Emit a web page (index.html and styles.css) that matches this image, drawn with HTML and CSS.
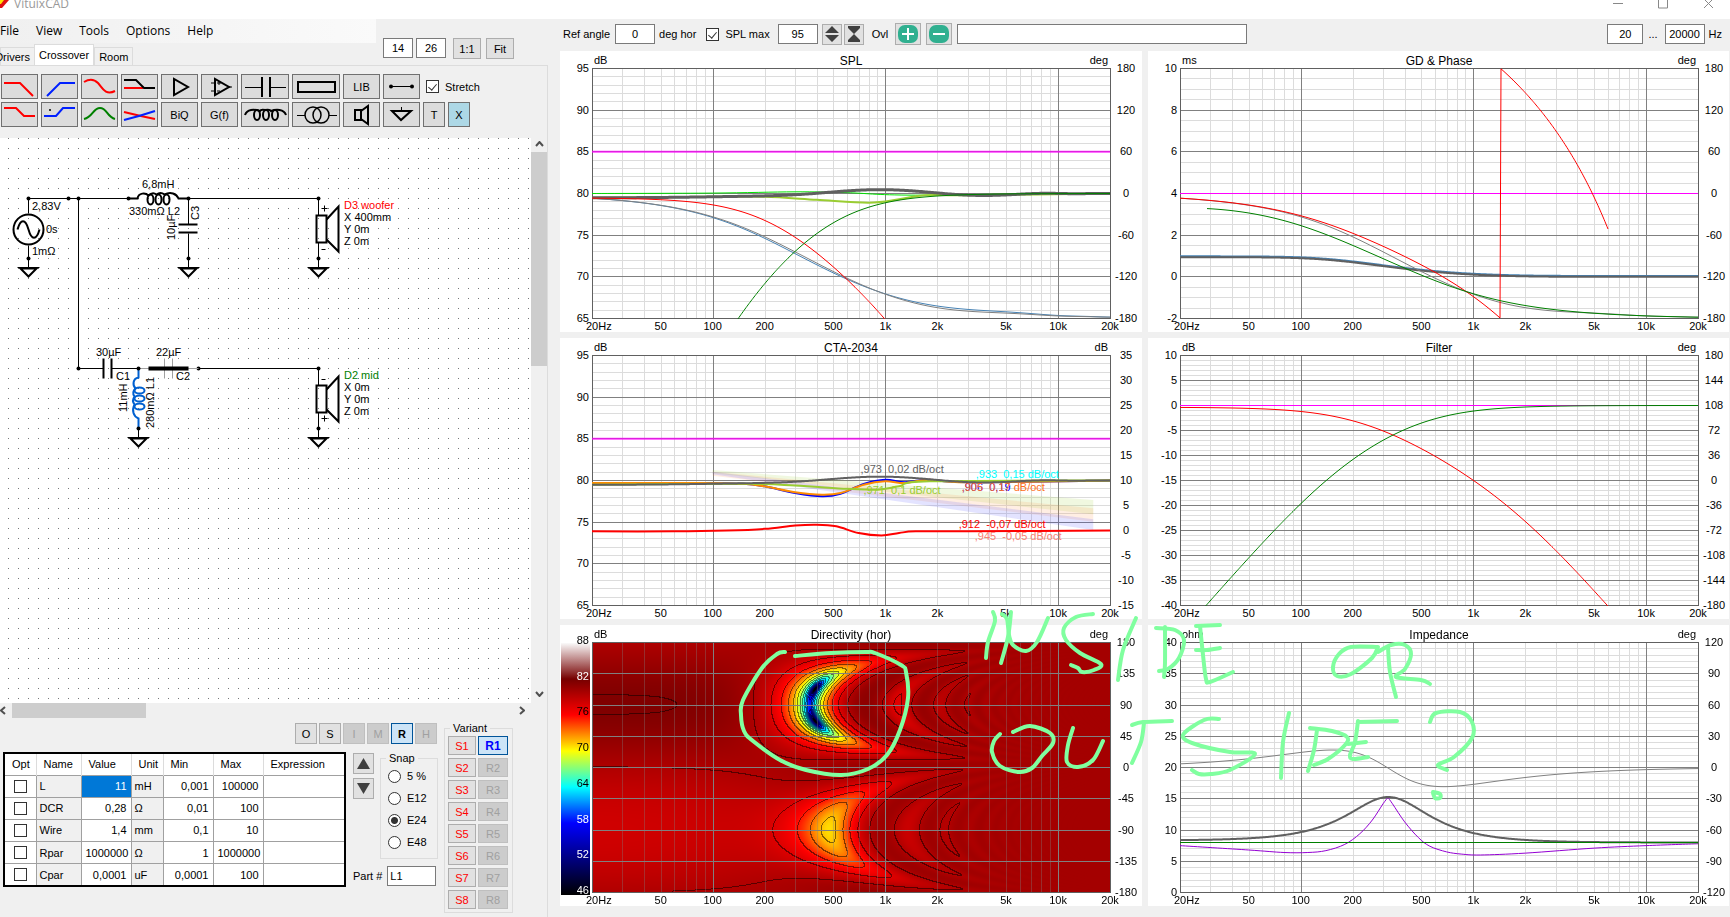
FILE: index.html
```html
<!DOCTYPE html>
<html lang="en">
<head>
    <meta charset="UTF-8">
    <meta name="viewport" content="width=device-width, initial-scale=1.0">
    <title>VituixCAD</title>
    <link rel="stylesheet" href="styles.css">
</head>
<body>
    <header class="titlebar">
        <svg class="logo" width="10" height="9" viewBox="0 0 10 9"><path d="M0 0h9L2 8H0z" fill="#e01010"/><path d="M0 0h4L1 4H0z" fill="#ffe000"/></svg>
        <span class="title">VituixCAD</span>
        <svg class="winbuttons" width="110" height="9" viewBox="0 0 110 9" fill="none" stroke="#888"><path d="M4 3.500h10M49.500 -2v10h9v-10M95 8l9-9M104 8l-9-9"/></svg>
    </header>

    <div class="main">
        <section class="left">
            <div class="head">
                <div class="nav">
                    <nav class="menu">
                        <a href="#">File</a><a href="#">View</a><a href="#">Tools</a><a href="#">Options</a><a href="#">Help</a>
                    </nav>
                    <div class="tabs">
                        <button class="tab first">Drivers</button>
                        <button class="tab active">Crossover</button>
                        <button class="tab">Room</button>
                    </div>
                </div>
                <div class="zoom">
                    <input type="text" value="14" aria-label="Columns">
                    <input type="text" value="26" aria-label="Rows">
                    <button class="btn one">1:1</button>
                    <button class="btn">Fit</button>
                </div>
            </div>

            <div class="page">
                <div class="parts">
                    <div class="row">
                        <button class="part" aria-label="Low pass"><svg viewBox="0 0 35 23"><path d="M2 8H18L31 21" stroke="red"/></svg></button>
                        <button class="part" aria-label="High pass"><svg viewBox="0 0 35 23"><path d="M5 21L18 8H33" stroke="#0020ff"/></svg></button>
                        <button class="part" aria-label="Shelf"><svg viewBox="0 0 35 23"><path d="M2 7C7 4 12 4 16 8S23 21 33 16" stroke="red"/></svg></button>
                        <button class="part" aria-label="Shelving"><svg viewBox="0 0 35 23"><path d="M2 13H21" stroke="red"/><path d="M2 5H14L22 13H33" stroke="#000"/></svg></button>
                        <button class="part" aria-label="Buffer"><svg viewBox="0 0 35 23"><path d="M12 4V20L26 12Z" stroke="#000"/></svg></button>
                        <button class="part" aria-label="Op amp"><svg viewBox="0 0 35 23"><path d="M13 4V20L27 12Z" stroke="#000"/><path d="M9 8H13M9 16H13M27 12H30M15 8H19M17 6V10M15 16H18" stroke="#000" stroke-width="1"/></svg></button>
                        <button class="part wide" aria-label="Capacitor"><svg viewBox="0 0 46 23"><path d="M3 12.500H20M28 12.500H44" stroke="#000" stroke-width="1"/><path d="M20 2V22M28 2V22" stroke="#000"/></svg></button>
                        <button class="part wide" aria-label="Resistor"><svg viewBox="0 0 46 23"><path d="M5 7H42V17H5Z" stroke="#000"/></svg></button>
                        <button class="part">LIB</button>
                        <button class="part" aria-label="Wire"><svg viewBox="0 0 35 23"><path d="M7 11.500H28" stroke="#000" stroke-width="1"/><circle cx="7" cy="11.500" r="2"/><circle cx="28" cy="11.500" r="2"/></svg></button>
                        <label class="stretch"><input type="checkbox" checked> Stretch</label>
                    </div>
                    <div class="row">
                        <button class="part" aria-label="Low shelf"><svg viewBox="0 0 35 23"><path d="M2 5H14L22 13H33" stroke="red"/></svg></button>
                        <button class="part" aria-label="High shelf"><svg viewBox="0 0 35 23"><path d="M2 13H14L21 5H33" stroke="#0020ff"/><circle cx="8" cy="7" r="1"/></svg></button>
                        <button class="part" aria-label="Peak"><svg viewBox="0 0 35 23"><path d="M2 16C11 14 11 5 18 5S25 14 33 16" stroke="#008000"/></svg></button>
                        <button class="part" aria-label="All pass"><svg viewBox="0 0 35 23"><path d="M2 9Q18 13 33 16" stroke="red"/><path d="M2 17Q18 13 33 8" stroke="#0020ff"/></svg></button>
                        <button class="part">BiQ</button>
                        <button class="part">G(f)</button>
                        <button class="part wide" aria-label="Inductor"><svg viewBox="0 0 46 23"><g stroke="#000"><path d="M3 12C5 6 12 6 18 8Q19 6 23 7Q28 6 29 8C34 6 42 6 44 12"/><ellipse cx="15" cy="12" rx="3" ry="5"/><ellipse cx="24" cy="12" rx="3" ry="5"/><ellipse cx="33" cy="12" rx="3" ry="5"/></g></svg></button>
                        <button class="part wide" aria-label="Transformer"><svg viewBox="0 0 46 23"><path d="M4 12.500H12M36 12.500H44" stroke="#000" stroke-width="1"/><g stroke="#000" stroke-width="1.500"><circle class="open" cx="20" cy="12" r="8"/><circle class="open" cx="28" cy="12" r="8"/></g></svg></button>
                        <button class="part" aria-label="Driver"><svg viewBox="0 0 35 23"><path d="M11 7H17V17H11ZM17 8L24 3V21L17 16" stroke="#000"/></svg></button>
                        <button class="part" aria-label="Ground"><svg viewBox="0 0 35 23"><path d="M17.500 4V8" stroke="#000" stroke-width="1"/><path d="M8 8H27L17 17Z" stroke="#000"/></svg></button>
                        <button class="part small">T</button>
                        <button class="part small blue">X</button>
                    </div>
                </div>

                <div class="sheet">
                    <div class="canvas">
                        <svg width="531" height="565" class="schematic">
                            <defs>
                                <g id="gnd"><path d="M0 0V9"/><path class="thick" d="M-8 10H8L0 18Z"/><path d="M-11 9H11"/><circle r="2" class="dot"/></g>
                                <g id="speaker">
                                    <path d="M0 0V17M0 44V60"/>
                                    <path class="thick" d="M-2 17H8V44H-2Z"/>
                                    <path class="thick" d="M8 21L20 8V53L8 41"/>
                                    <circle r="2" class="dot"/>
                                </g>
                                <g id="coil" class="thick">
                                    <path d="M0 0H9C10 -6 17 -6 20 -3Q24 -7 28 -4Q32 -7 36 -4C42 -7 48 -5 50 0H60"/>
                                    <ellipse cx="22" cy="1" rx="3" ry="5"/><ellipse cx="30" cy="1" rx="3" ry="5"/><ellipse cx="38" cy="1" rx="3" ry="5"/>
                                </g>
                            </defs>
                            <g transform="translate(.5 .5)">
                                <path d="M28 60H137M179 60H318M78 60V230H103M111 230H138M198 230H318M188 60V86M188 95V120M28 60V75M28 107V120"/>
                                <use href="#coil" x="128" y="60"/>
                                <g class="dot">
                                    <circle cx="28" cy="60" r="2"/><circle cx="68" cy="60" r="2"/><circle cx="78" cy="60" r="2"/><circle cx="128" cy="60" r="2"/><circle cx="188" cy="60" r="2"/>
                                    <circle cx="78" cy="230" r="2"/><circle cx="198" cy="230" r="2"/>
                                </g>
                                <g class="thick">
                                    <circle cx="28" cy="91" r="15"/>
                                    <path d="M17 91C20 80 25 80 28 91S36 102 39 91"/>
                                    <path d="M178 86H197M178 94H197M103 220V240M111 220V240"/>
                                </g>
                                <path class="ghost" d="M138 230H198M164 220V240M172 220V240"/>
                                <path class="short" d="M148 230H188"/>
                                <g class="selected" transform="translate(138 230) rotate(90) scale(1 -1)"><use href="#coil"/></g>
                                <circle class="dot" cx="138" cy="230" r="2"/>
                                <use href="#gnd" x="28" y="120"/><use href="#gnd" x="188" y="120"/><use href="#gnd" x="318" y="120"/>
                                <use href="#gnd" x="138" y="290"/><use href="#gnd" x="318" y="290"/>
                                <use href="#speaker" x="318" y="60"/><use href="#speaker" x="318" y="230"/>
                                <path d="M321 70H327M324 67V73M321 111H325M321 241H325M321 280H327M324 277V283"/>
                            </g>
                            <g class="names">
                                <text x="142" y="50">6,8mH</text><text x="129" y="77">330mΩ L2</text>
                                <text x="32" y="72">2,83V</text><text x="46" y="95">0s</text><text x="32" y="117">1mΩ</text>
                                <text transform="translate(199 82) rotate(-90)">C3</text><text transform="translate(175 102) rotate(-90)">10µF</text>
                                <text x="96" y="218">30µF</text><text x="156" y="218">22µF</text><text x="116" y="242">C1</text><text x="176" y="242">C2</text>
                                <text transform="translate(127 274) rotate(-90)">11mH</text><text transform="translate(154 290) rotate(-90)">280mΩ L1</text>
                                <text x="344" y="71" fill="red">D3 woofer</text><text x="344" y="83">X 400mm</text><text x="344" y="95">Y 0m</text><text x="344" y="107">Z 0m</text>
                                <text x="344" y="241" fill="green">D2 mid</text><text x="344" y="253">X 0m</text><text x="344" y="265">Y 0m</text><text x="344" y="277">Z 0m</text>
                            </g>
                        </svg>
                    </div>
                    <div class="vscroll">
                        <svg width="9" height="6" viewBox="0 0 9 6"><path d="M1 5L4.500 1L8 5"/></svg>
                        <div class="vthumb"></div>
                        <svg width="9" height="6" viewBox="0 0 9 6"><path d="M1 1L4.500 5L8 1"/></svg>
                    </div>
                </div>
                <div class="hscroll">
                    <svg width="6" height="9" viewBox="0 0 6 9"><path d="M5 1L1 4.500L5 8"/></svg>
                    <div class="hthumb"></div>
                    <svg width="6" height="9" viewBox="0 0 6 9"><path d="M1 1L5 4.500L1 8"/></svg>
                </div>

                <div class="props">
                    <div class="editor">
                        <div class="modes">
                            <button class="btn">O</button><button class="btn">S</button><button class="btn" disabled>I</button><button class="btn" disabled>M</button><button class="btn on">R</button><button class="btn" disabled>H</button>
                        </div>
                        <div class="editrow">
                            <table>
                                <thead>
                                    <tr><th class="c-opt">Opt</th><th class="c-name">Name</th><th class="c-value">Value</th><th class="c-unit">Unit</th><th class="c-min">Min</th><th class="c-max">Max</th><th>Expression</th></tr>
                                </thead>
                                <tbody>
                                    <tr><td><input type="checkbox" aria-label="Optimize L"></td><td>L</td><td class="sel">11</td><td>mH</td><td>0,001</td><td>100000</td><td></td></tr>
                                    <tr><td><input type="checkbox" aria-label="Optimize DCR"></td><td>DCR</td><td>0,28</td><td>Ω</td><td>0,01</td><td>100</td><td></td></tr>
                                    <tr><td><input type="checkbox" aria-label="Optimize Wire"></td><td>Wire</td><td>1,4</td><td>mm</td><td>0,1</td><td>10</td><td></td></tr>
                                    <tr><td><input type="checkbox" aria-label="Optimize Rpar"></td><td>Rpar</td><td>1000000</td><td>Ω</td><td>1</td><td>1000000</td><td></td></tr>
                                    <tr><td><input type="checkbox" aria-label="Optimize Cpar"></td><td>Cpar</td><td>0,0001</td><td>uF</td><td>0,0001</td><td>100</td><td></td></tr>
                                </tbody>
                            </table>
                            <div class="side">
                                <div class="siderow">
                                    <div class="arrows">
                                        <button class="btn" aria-label="Up"><svg width="13" height="11" viewBox="0 0 13 11"><path d="M6.500 0L13 11H0z"/></svg></button>
                                        <button class="btn" aria-label="Down"><svg width="13" height="11" viewBox="0 0 13 11"><path d="M6.500 11L13 0H0z"/></svg></button>
                                    </div>
                                    <fieldset class="snap">
                                        <legend>Snap</legend>
                                        <label><input type="radio" name="snap">5 %</label>
                                        <label><input type="radio" name="snap">E12</label>
                                        <label><input type="radio" name="snap" checked>E24</label>
                                        <label><input type="radio" name="snap">E48</label>
                                    </fieldset>
                                </div>
                                <div class="partno"><label for="partno">Part #</label><input type="text" id="partno" value="L1"></div>
                            </div>
                        </div>
                    </div>
                    <fieldset class="variant">
                        <legend>Variant</legend>
                        <button class="btn s">S1</button><button class="btn on">R1</button>
                        <button class="btn s">S2</button><button class="btn" disabled>R2</button>
                        <button class="btn s">S3</button><button class="btn" disabled>R3</button>
                        <button class="btn s">S4</button><button class="btn" disabled>R4</button>
                        <button class="btn s">S5</button><button class="btn" disabled>R5</button>
                        <button class="btn s">S6</button><button class="btn" disabled>R6</button>
                        <button class="btn s">S7</button><button class="btn" disabled>R7</button>
                        <button class="btn s">S8</button><button class="btn" disabled>R8</button>
                    </fieldset>
                </div>
            </div>
        </section>

        <section class="right">
            <div class="bar">
                <label for="refangle">Ref angle</label>
                <input type="text" id="refangle" value="0">
                <span>deg hor</span>
                <label class="splmax"><input type="checkbox" checked>SPL max</label>
                <input type="text" value="95" aria-label="SPL max value">
                <div class="pair">
                    <button class="btn" aria-label="Shift scale"><svg width="14" height="16" viewBox="0 0 14 16"><path d="M7 0L14 7H0zM7 16L14 9H0z"/></svg></button>
                    <button class="btn" aria-label="Fit scale"><svg width="14" height="16" viewBox="0 0 14 16"><path d="M7 8L13 2H1zM7 8L13 14H1zM1 0H13V2H1zM1 14H13V16H1z"/></svg></button>
                </div>
                <label for="ovl">Ovl</label>
                <div class="ovlbuttons">
                    <button class="btn" aria-label="Add overlay"><svg width="20" height="18" viewBox="0 0 20 18"><rect width="20" height="18" rx="7" fill="#30b090"/><path d="M4 9H16M10 3V15" stroke="#fff" stroke-width="2"/></svg></button>
                    <button class="btn" aria-label="Remove overlay"><svg width="20" height="18" viewBox="0 0 20 18"><rect width="20" height="18" rx="7" fill="#30b090"/><path d="M4 9H16" stroke="#fff" stroke-width="2"/></svg></button>
                </div>
                <input type="text" id="ovl" class="ovl">
                <input type="text" value="20" class="fmin" aria-label="Lowest frequency">
                <span class="dots">...</span>
                <input type="text" id="fmax" value="20000">
                <label for="fmax">Hz</label>
            </div>
            <div class="charts">
                <div class="chart" id="spl"></div>
                <div class="chart" id="gd"></div>
                <div class="chart" id="cta"></div>
                <div class="chart" id="filter"></div>
                <div class="chart" id="directivity"></div>
                <div class="chart" id="impedance"></div>
            </div>
        </section>
    </div>
    <svg class="ink" id="ink" viewBox="0 0 1730 917" preserveAspectRatio="none"></svg>
    <script src="charts.js"></script>
</body>
</html>
```
FILE: styles.css
```css
* {
    box-sizing: border-box;
}
body {
    margin: 0;
    height: 100vh;
    display: flex;
    flex-direction: column;
    overflow: hidden;
    background: #f0f0f0;
    font-family: "Liberation Sans", Arial, sans-serif;
    font-size: 11px;
    color: #000;
}
button, input {
    font: inherit;
    color: inherit;
    margin: 0;
}
input[type="text"] {
    height: 20px;
    border: 1px solid #7a7a7a;
    background: #fff;
    padding: 0;
    text-align: center;
}
.btn {
    display: flex;
    align-items: center;
    justify-content: center;
    padding: 0;
    border: 1px solid #adadad;
    background: #e1e1e1;
}
.btn:disabled {
    border-color: #bfbfbf;
    background: #ccc;
    color: #a0a0a0;
}
.btn.on {
    border-color: #005499;
    background: #cce4f7;
    font-weight: bold;
}
.btn svg {
    fill: #404040;
}
input[type="checkbox"], input[type="radio"] {
    appearance: none;
    flex: none;
    width: 13px;
    height: 13px;
    border: 1px solid #333;
    background: #fff;
}
input[type="radio"] {
    border-radius: 50%;
}
input[type="radio"]:checked {
    background: radial-gradient(circle, #333 3px, #fff 4px);
}
input[type="checkbox"]:checked::before {
    content: "";
    display: block;
    width: 4px;
    height: 7px;
    margin: 1px 0 0 3px;
    border: solid #333;
    border-width: 0 1px 1px 0;
    transform: rotate(40deg);
}

/* title bar */
.titlebar {
    flex: none;
    display: flex;
    align-items: flex-end;
    height: 19px;
    padding-bottom: 7px;
    background: #fff;
    overflow: hidden;
}
.title {
    margin-left: 4px;
    font: 12px/16px "Open Sans", sans-serif;
    color: #999;
}
.logo {
    align-self: flex-start;
}
.winbuttons {
    align-self: flex-start;
    margin-left: auto;
    margin-right: 11px;
}

.main {
    flex: 1;
    display: flex;
    min-height: 0;
}

/* left side */
.left {
    flex: none;
    width: 550px;
    display: flex;
    flex-direction: column;
}
.head {
    display: flex;
    height: 46px;
}
.nav {
    width: 376px;
}
.menu {
    display: flex;
    gap: 17px;
    height: 24px;
    background: linear-gradient(to right, #f0f0f0, #fafafa);
    font: 12px/24px "Open Sans", sans-serif;
}
.menu a {
    color: #000;
    text-decoration: none;
}
.tabs {
    display: flex;
    align-items: flex-end;
    height: 22px;
}
.tab {
    height: 18px;
    padding: 0 4px;
    border: 1px solid #dcdcdc;
    border-bottom: 0;
    background: #f0f0f0;
}
.tab.first {
    width: 34px;
    padding: 0 4px 0 0;
    direction: rtl;
    border-right: 0;
}
.tab.active {
    height: 21px;
    background: #fff;
}
.zoom {
    display: flex;
    align-items: flex-start;
    gap: 3px;
    padding: 19px 0 0 7px;
}
.zoom input {
    width: 30px;
}
.zoom .btn {
    width: 28px;
    height: 21px;
    margin-left: 2px;
}
.zoom .one {
    margin-left: 4px;
}
.page {
    flex: 1;
    display: flex;
    flex-direction: column;
    min-height: 0;
    margin-right: 2px;
    border-top: 1px solid #dcdcdc;
    border-right: 1px solid #dcdcdc;
}
.parts {
    padding: 8px 0 11px 1px;
}
.row {
    display: flex;
    gap: 3px;
    margin-bottom: 3px;
}
.row + .row {
    margin-bottom: 0;
}
.part {
    width: 37px;
    height: 25px;
    padding: 0;
    border: 1px solid #707070;
    background: #dcdcdc;
}
.part.wide {
    width: 48px;
}
.part.small {
    width: 22px;
}
.part.blue {
    background: #add8e6;
}
.part svg {
    display: block;
    width: 100%;
    height: 23px;
    stroke-width: 2;
}
.part path, .part ellipse, .part .open {
    fill: none;
}
.stretch {
    display: flex;
    align-items: center;
    gap: 6px;
    margin-left: 3px;
}

.sheet {
    flex: 1;
    display: flex;
    min-height: 0;
}
.canvas {
    flex: 1;
    overflow: hidden;
    background: radial-gradient(circle at 0 0, #777 1px, transparent 1px) 8px 10px / 10px 10px, #fff;
}
.schematic {
    display: block;
    fill: none;
    stroke: #000;
}
.schematic .thick {
    stroke-width: 2;
}
.schematic .dot {
    fill: #000;
    stroke: none;
}
.schematic .ghost {
    stroke: #a0a0a0;
}
.schematic .short {
    stroke-width: 4;
}
.schematic .selected {
    stroke: #0060d0;
}
.names text {
    stroke: none;
    font-size: 11px;
}
.names text:not([fill]) {
    fill: #000;
}
.vscroll {
    display: flex;
    flex-direction: column;
    align-items: center;
    justify-content: space-between;
    width: 16px;
    padding: 3px 0 6px;
}
.vthumb {
    width: 16px;
    height: 214px;
    margin: 5px 0 auto;
    background: #cdcdcd;
}
.hscroll {
    display: flex;
    align-items: center;
    height: 15px;
    padding-right: 22px;
}
.hthumb {
    width: 134px;
    height: 15px;
    margin: 0 auto 0 6px;
    background: #cdcdcd;
}
.vscroll svg, .hscroll svg {
    fill: none;
    stroke: #505050;
    stroke-width: 2;
}

/* part values */
.props {
    display: flex;
    gap: 6px;
    height: 199px;
    padding-left: 3px;
}
.editor {
    width: 435px;
}
.modes {
    display: flex;
    justify-content: flex-end;
    gap: 2px;
    padding: 5px 1px 8px 0;
}
.modes .btn {
    width: 22px;
    height: 21px;
}
.editrow {
    display: flex;
    gap: 7px;
}
table {
    width: 343px;
    height: 135px;
    table-layout: fixed;
    border-collapse: collapse;
    border: 2px solid #000;
    background: #fff;
}
th {
    height: 22px;
    padding: 0 7px;
    border-right: 1px solid #dcdcdc;
    font-weight: normal;
    text-align: left;
}
td {
    height: 22px;
    padding: 0 4px;
    border: 1px solid #a0a0a0;
    text-align: right;
}
.c-opt { width: 32px; }
.c-name { width: 45px; }
.c-value { width: 50px; }
.c-unit { width: 32px; }
.c-min { width: 50px; }
.c-max { width: 50px; }
td:first-child {
    text-align: center;
}
td:nth-child(2), td:nth-child(4) {
    padding-left: 3px;
    background: #f0f0f0;
    text-align: left;
}
td input[type="checkbox"] {
    display: block;
    margin: auto;
}
td.sel {
    background: #0078d7;
    color: #fff;
}
.side {
    width: 85px;
}
.siderow {
    display: flex;
    gap: 6px;
}
.arrows .btn {
    width: 21px;
    height: 21px;
    margin: 1px 0 4px;
}
fieldset {
    margin: 0;
    padding: 0;
    border: 1px solid #dcdcdc;
}
legend {
    padding: 0 3px;
    line-height: 13px;
}
.snap {
    width: 58px;
    height: 107px;
    padding-left: 7px;
}
.snap label {
    display: flex;
    align-items: center;
    gap: 6px;
    height: 22px;
}
.snap legend {
    margin-left: -2px;
}
.partno {
    display: flex;
    align-items: center;
    gap: 5px;
    margin-top: 7px;
}
.partno input {
    width: 49px;
    padding-left: 2px;
    text-align: left;
}
.variant {
    display: grid;
    grid-template-columns: 28px 30px;
    grid-auto-rows: 19px;
    gap: 3px 2px;
    width: 69px;
    height: 191px;
    margin-top: 4px;
    padding: 1px 3px 0;
}
.variant legend {
    margin-left: 2px;
}
.variant .s {
    color: red;
}
.variant .on {
    color: blue;
    font-size: 12px;
}

/* right side */
.right {
    flex: 1;
    display: flex;
    flex-direction: column;
    min-width: 0;
    padding: 0 1px 11px 10px;
}
.bar {
    display: flex;
    align-items: center;
    height: 32px;
    padding: 0 7px 2px 3px;
}
.bar input[type="text"] {
    width: 40px;
    margin: 0 4px 0 5px;
}
.splmax {
    display: flex;
    align-items: center;
    gap: 6px;
    margin: 0 3px 0 10px;
}
.pair, .ovlbuttons {
    display: flex;
    gap: 2px;
    margin-right: 8px;
}
.pair .btn {
    width: 20px;
    height: 21px;
}
.ovlbuttons {
    gap: 5px;
    margin: 0 0 0 7px;
}
.ovlbuttons .btn {
    width: 26px;
    height: 22px;
}
.bar input.ovl {
    width: 290px;
}
.bar input.fmin {
    width: 36px;
    margin-left: auto;
}
.dots {
    margin: 0 2px 0 1px;
}
.charts {
    flex: 1;
    display: grid;
    grid-template-columns: 1fr 1fr;
    grid-template-rows: 1fr 1fr 1fr;
    gap: 6px;
    min-height: 0;
}
.chart {
    position: relative;
    min-width: 0;
    min-height: 0;
    overflow: hidden;
    background: #fff;
}
.chart svg {
    position: absolute;
    left: 0;
    top: 0;
    width: 100%;
    height: 100%;
}
.chart canvas {
    position: absolute;
    left: 32px;
    top: 17px;
}
.chart text {
    font-size: 11px;
    white-space: pre;
}
.chart .caption {
    font-size: 12px;
}
.minor {
    stroke: #dcdcdc;
}
.major {
    stroke: #808080;
}
.frame {
    fill: none;
    stroke: #606060;
}
.over .minor {
    stroke: #808080;
    stroke-opacity: .35;
}
.curve {
    fill: none;
    stroke-linejoin: round;
}
.ink {
    position: absolute;
    left: 0;
    top: 0;
    width: 100%;
    height: 100%;
    pointer-events: none;
    fill: none;
    stroke: #80ff9f;
    stroke-width: 4;
    stroke-linecap: round;
    stroke-linejoin: round;
}
```
FILE: charts.js
```js
const NS = 'http://www.w3.org/2000/svg';
const PAD = { left: 32, right: 32, top: 17, bottom: 14 };
const FMIN = 20, FMAX = 20000;

// complex numbers as [re, im]
const add = (a, b) => [a[0] + b[0], a[1] + b[1]];
const mul = (a, b) => [a[0] * b[0] - a[1] * b[1], a[0] * b[1] + a[1] * b[0]];
const div = (a, b) => {
    const d = b[0] * b[0] + b[1] * b[1];
    return [(a[0] * b[0] + a[1] * b[1]) / d, (a[1] * b[0] - a[0] * b[1]) / d];
};
const par = (a, b) => div(mul(a, b), add(a, b));
const db = a => 20 * Math.log10(Math.hypot(a[0], a[1]));
const deg = a => Math.atan2(a[1], a[0]) * 180 / Math.PI;
const wrap = p => p > 20 ? p - 360 : p;

// crossover network, 8 ohm drivers
function network(f) {
    const w = 2 * Math.PI * f;
    const load = [8, 0];
    const zc3 = par(load, [0, -1 / (w * 10e-6)]);
    const zw = add(zc3, [0.33, w * 6.8e-3]);
    const zl1 = par(load, [0.28, w * 11e-3]);
    const zm = add(zl1, [0, -1 / (w * 30e-6)]);
    return { woofer: div(zc3, zw), mid: div(zl1, zm), z: par(zw, zm) };
}

// sum of both drivers at 2 m, woofer 400 mm off the axis, mid inverted
function wooferAt(n, f, sin) {
    const d = Math.sqrt(4.16 - 1.6 * sin);
    const p = -2 * Math.PI * f / 344 * (d - 2);
    return mul(n.woofer, [2 / d * Math.cos(p), 2 / d * Math.sin(p)]);
}
function total(f, sin) {
    const n = network(f);
    const w = wooferAt(n, f, sin);
    return [w[0] - n.mid[0], w[1] - n.mid[1]];
}

function phase(f) { return wrap(deg(total(f, 0))); }
function groupDelay(f) { return -(phase(f * 1.01) - phase(f * 0.99)) / (360 * f * 0.02) * 1000; }
function bluePhase(f) {
    const u = Math.log(f / 900) / 1.5;
    return phase(f) + 6 * u * Math.exp(-u * u);
}

function el(parent, name, attrs, text) {
    const e = document.createElementNS(NS, name);
    for (const k in attrs) e.setAttribute(k, attrs[k]);
    if (text !== undefined) e.textContent = text;
    parent.appendChild(e);
    return e;
}

function spline(pts) {
    let d = `M${pts[0][0]} ${pts[0][1]}`;
    for (let i = 0; i < pts.length - 1; i++) {
        const p0 = pts[i - 1] || pts[i], p1 = pts[i], p2 = pts[i + 1], p3 = pts[i + 2] || p2;
        d += `C${p1[0] + (p2[0] - p0[0]) / 6} ${p1[1] + (p2[1] - p0[1]) / 6} ${p2[0] - (p3[0] - p1[0]) / 6} ${p2[1] - (p3[1] - p1[1]) / 6} ${p2[0]} ${p2[1]}`;
    }
    return d;
}

const charts = {
    spl: {
        title: 'SPL', units: ['dB', 'deg'], y: [65, 95], step: 5, minor: 1,
        right: [-180, 180], rightStep: 60,
        series: [
            { color: '#ff00ff', fn: () => 85, width: 2, opacity: .75 },
            { color: '#4682b4', fn: bluePhase, axis: 1, width: 1 },
            { color: '#808080', fn: phase, axis: 1, width: 1 },
            { color: '#00e000', pts: [[20, 80], [100, 80.05], [300, 80.2], [600, 80.1], [1500, 79.8], [20000, 79.95]] },
            { color: '#9acd32', pts: [[20, 79.5], [100, 79.6], [200, 79.6], [400, 79.25], [800, 78.9], [1200, 79.3], [1700, 79.8], [3000, 79.8], [20000, 80]], width: 2 },
            { color: '#606060', fn: f => db(total(f, 0)) + 80, width: 3 },
            { color: 'red', fn: f => db(network(f).woofer) + 79.83 },
            { color: 'green', fn: f => db(network(f).mid) + 80 }
        ]
    },
    gd: {
        title: 'GD & Phase', units: ['ms', 'deg'], y: [-2, 10], step: 2, minor: .5,
        right: [-180, 180], rightStep: 60,
        series: [
            { color: '#ff00ff', fn: () => 4 },
            { color: '#4682b4', fn: f => groupDelay(f) + .04, width: 2 },
            { color: '#606060', fn: groupDelay, width: 2 },
            { color: '#808080', fn: phase, axis: 1 },
            { color: 'red', fn: f => { const n = network(f); return db(n.woofer) < -40.3 ? null : deg(wooferAt(n, f, 0)); }, axis: 1 },
            { color: 'green', fn: f => { const m = network(f).mid; return db(m) < -39.8 ? null : wrap(deg([-m[0], -m[1]])); }, axis: 1 }
        ]
    },
    cta: {
        title: 'CTA-2034', units: ['dB', 'dB'], y: [65, 95], step: 5, minor: 1,
        right: [-15, 35], rightStep: 5,
        bands: [
            { color: '#9acd32', pts: [[100, 81.2], [16000, 77.6], [16000, 75.9], [100, 80.8]] },
            { color: '#ff8c40', pts: [[100, 81], [16000, 76.6], [16000, 75], [100, 80.5]] },
            { color: '#4040ff', pts: [[100, 81], [16000, 75.3], [16000, 74], [100, 80.7]] }
        ],
        series: [
            { color: '#ff00ff', fn: () => 85, width: 2, opacity: .75 },
            { color: 'blue', pts: [[20, 79.6], [80, 79.7], [150, 79.6], [200, 79.3], [300, 78.5], [430, 78.1], [550, 78.4], [750, 79.6], [1000, 80.1], [1300, 79.8], [1800, 80.1], [3000, 79.8], [20000, 80]], width: 2 },
            { color: '#ff8c00', pts: [[20, 79.7], [80, 79.7], [150, 79.6], [200, 79.3], [300, 78.6], [430, 78.3], [550, 78.5], [750, 79.5], [1000, 79.9], [1300, 79.7], [1800, 80.1], [3000, 79.8], [20000, 80]], width: 2 },
            { color: '#9acd32', pts: [[20, 79.5], [150, 79.6], [300, 79.4], [600, 79], [900, 78.9], [1200, 79.3], [1800, 79.9], [20000, 80]], width: 2 },
            { color: '#606060', fn: f => db(total(f, 0)) + 80, width: 2 },
            { color: 'red', pts: [[20, 73.9], [60, 73.9], [120, 74], [200, 74.2], [300, 74.6], [400, 74.7], [520, 74.5], [700, 73.7], [950, 73.4], [1200, 73.7], [1500, 73.9], [3000, 73.9], [20000, 74]], width: 2 }
        ],
        notes: [
            [300, 135, '#606060', ',973  0,02 dB/oct'], [303, 156, '#9acd32', ',971  0,1 dB/oct'],
            [415, 140, 'cyan', ',933  0,15 dB/oct'], [401, 153, 'blue', ',906  0,19'], [401, 153, '#ff7020', ',905  0,17 dB/oct'],
            [398, 190, 'red', ',912  -0,07 dB/oct'], [414, 202, '#fa8072', ',945  -0,05 dB/oct']
        ]
    },
    filter: {
        title: 'Filter', units: ['dB', 'deg'], y: [-40, 10], step: 5, minor: 1,
        right: [-180, 180], rightStep: 36,
        series: [
            { color: '#ff00ff', fn: () => 0 },
            { color: 'red', fn: f => db(network(f).woofer) },
            { color: 'green', fn: f => db(network(f).mid) }
        ]
    },
    directivity: {
        title: 'Directivity (hor)', units: ['dB', 'deg'], y: [-180, 180], step: 45, minor: 45,
        right: [-180, 180], rightStep: 45, map: true, series: []
    },
    impedance: {
        title: 'Impedance', units: ['ohm', 'deg'], y: [0, 40], step: 5, minor: 1,
        right: [-120, 120], rightStep: 30,
        series: [
            { color: '#808080', fn: f => deg(network(f).z), axis: 1 },
            { color: '#9400d3', pts: [[20, 7.5], [50, 6.8], [80, 6.4], [110, 6.4], [140, 6.7], [180, 7.7], [220, 9.4], [260, 11.6], [300, 14.2], [320, 15.2]] },
            { color: '#9400d3', pts: [[320, 15.2], [340, 14.2], [400, 11.3], [480, 8.8], [560, 7.4], [700, 6.5], [850, 6.15], [1100, 6], [2000, 6.3], [5000, 7.1], [10000, 7.5], [20000, 7.8]] },
            { color: '#606060', fn: f => Math.hypot(...network(f).z), width: 2 },
            { color: 'green', fn: () => 8, width: 1 }
        ]
    }
};

const colors = [[46, 0, 0, 0], [52, 0, 0, 128], [58, 0, 0, 255], [64, 0, 255, 255], [70, 255, 255, 0], [76, 255, 0, 0], [82, 118, 0, 0], [88, 250, 250, 250]];

function levelColor(v) {
    let i = 1;
    while (i < colors.length - 1 && v > colors[i][0]) i++;
    const a = colors[i - 1], b = colors[i];
    const t = Math.max(0, Math.min(1, (v - a[0]) / (b[0] - a[0])));
    return [1, 2, 3].map(k => a[k] + (b[k] - a[k]) * t);
}

function drawMap(host, w, h) {
    const canvas = document.createElement('canvas');
    canvas.width = w;
    canvas.height = h;
    host.appendChild(canvas);
    const ctx = canvas.getContext('2d');
    w = canvas.width;
    h = canvas.height;
    const img = ctx.createImageData(w, h);
    const level = new Float32Array(w * h);
    for (let x = 0; x < w; x++) {
        const f = FMIN * Math.pow(FMAX / FMIN, x / w);
        for (let y = 0; y < h; y++) {
            level[y * w + x] = db(total(f, Math.sin((180 - 360 * y / h) * Math.PI / 180))) + 80;
        }
    }
    // contour every 2 dB below the on-axis level
    const band = v => Math.floor((v - 79.5) / 2);
    for (let y = 0; y < h; y++) {
        for (let x = 0; x < w; x++) {
            const i = y * w + x;
            const b = band(level[i]);
            const edge = (x + 1 < w && band(level[i + 1]) !== b) || (y + 1 < h && band(level[i + w]) !== b);
            const c = levelColor(level[i]);
            for (let k = 0; k < 3; k++) img.data[i * 4 + k] = c[k] * (edge ? .5 : 1);
            img.data[i * 4 + 3] = 255;
        }
    }
    ctx.putImageData(img, 0, 0);
}

function drawChart(id) {
    const host = document.getElementById(id);
    const c = charts[id];
    host.innerHTML = '';
    const W = host.clientWidth, H = host.clientHeight;
    const L = PAD.left, T = PAD.top, R = W - PAD.right, B = H - PAD.bottom;
    const X = f => L + (R - L) * Math.log(f / FMIN) / Math.log(FMAX / FMIN);
    const Y = (v, r) => B - (B - T) * (v - r[0]) / (r[1] - r[0]);
    const px = v => Math.round(v) + .5;

    if (c.map) drawMap(host, R - L, B - T);
    const svg = el(host, 'svg', {});
    const clip = el(svg, 'clipPath', { id: 'clip-' + id });
    el(clip, 'rect', { x: L, y: T, width: R - L, height: B - T + 1 });

    const grid = el(svg, 'g', c.map ? { class: 'over' } : {});
    for (let dec = 10; dec <= FMAX; dec *= 10) {
        for (let k = 2; k < 10; k++) {
            const f = dec * k;
            if (f > FMIN && f < FMAX) el(grid, 'path', { class: 'minor', d: `M${px(X(f))} ${T}V${B}` });
        }
    }
    for (let v = c.y[0]; v <= c.y[1]; v += c.minor) el(grid, 'path', { class: 'minor', d: `M${L} ${px(Y(v, c.y))}H${R}` });
    for (const f of [100, 1000, 10000]) el(grid, 'path', { class: 'major', d: `M${px(X(f))} ${T}V${B}` });
    for (let v = c.y[0]; v <= c.y[1]; v += c.step) el(grid, 'path', { class: 'major', d: `M${L} ${px(Y(v, c.y))}H${R}` });
    el(svg, 'rect', { class: 'frame', x: L + .5, y: T + .5, width: R - L, height: B - T });

    const plot = el(svg, 'g', { 'clip-path': `url(#clip-${id})` });
    for (const b of c.bands || []) {
        el(plot, 'polygon', { points: b.pts.map(p => X(p[0]) + ',' + Y(p[1], c.y)).join(' '), fill: b.color, 'fill-opacity': .15 });
    }
    for (const s of c.series) {
        const range = s.axis ? c.right : c.y;
        let d = '';
        if (s.pts) {
            d = spline(s.pts.map(p => [X(p[0]), Y(p[1], range) + .5]));
        } else {
            for (let x = L; x <= R; x++) {
                const v = s.fn(FMIN * Math.pow(FMAX / FMIN, (x - L) / (R - L)));
                if (v !== null) d += (d ? 'L' : 'M') + x + ' ' + (Y(v, range) + .5);
            }
        }
        el(plot, 'path', { class: 'curve', d, stroke: s.color, 'stroke-width': s.width || 1, 'stroke-opacity': s.opacity || 1 });
    }
    for (const n of c.notes || []) el(svg, 'text', { x: n[0] / 581 * W, y: n[1] / 281 * H, fill: n[2] }, n[3]);

    el(svg, 'text', { class: 'caption', x: W / 2, y: 14, 'text-anchor': 'middle' }, c.title);
    el(svg, 'text', { x: L + 2, y: 13 }, c.units[0]);
    el(svg, 'text', { x: R - 2, y: 13, 'text-anchor': 'end' }, c.units[1]);
    if (c.map) {
        const defs = el(svg, 'linearGradient', { id: 'scale', x1: 0, y1: 1, x2: 0, y2: 0 });
        for (const s of colors) el(defs, 'stop', { offset: (s[0] - 46) / 42, 'stop-color': `rgb(${s[1]},${s[2]},${s[3]})` });
        el(svg, 'rect', { x: 1, y: T + 1, width: L - 3, height: B - T + 2, fill: 'url(#scale)' });
        for (let v = 46; v <= 88; v += 6) {
            el(svg, 'text', { x: L - 3, y: Y(v, [46, 88]) + 2, 'text-anchor': 'end', fill: v < 60 || v === 82 ? '#fff' : '#000' }, v);
        }
    } else {
        for (let v = c.y[0]; v <= c.y[1]; v += c.step) el(svg, 'text', { x: L - 3, y: Y(v, c.y) + 4, 'text-anchor': 'end' }, v);
    }
    for (let v = c.right[0]; v <= c.right[1]; v += c.rightStep) el(svg, 'text', { x: W - 16, y: Y(v, c.right) + 4, 'text-anchor': 'middle' }, v);
    const ticks = { 50: '50', 100: '100', 200: '200', 500: '500', 1000: '1k', 2000: '2k', 5000: '5k', 10000: '10k', 20000: '20k' };
    el(svg, 'text', { x: L - 6, y: B + 12 }, '20Hz');
    for (const f in ticks) el(svg, 'text', { x: X(f), y: B + 12, 'text-anchor': 'middle' }, ticks[f]);
}

// pen notes over the charts
const strokes = [
    [[785, 652], [777, 654], [762, 668], [743, 700], [741, 715], [744, 731], [753, 741], [780, 760], [806, 770], [841, 775], [868, 769], [887, 755], [900, 730], [908, 698], [906, 672], [901, 665], [875, 653], [866, 652], [831, 653], [795, 656]],
    [[993, 612], [995, 621], [988, 642], [986, 658]],
    [[1011, 612], [1008, 637], [1001, 663]],
    [[1002, 614], [1007, 619], [1009, 635], [1013, 645], [1026, 651], [1037, 642], [1048, 618]],
    [[1093, 614], [1076, 617], [1064, 628], [1066, 640], [1080, 653], [1101, 664], [1094, 670], [1082, 672], [1078, 668], [1071, 665]],
    [[1136, 618], [1123, 650], [1118, 680]],
    [[1165, 627], [1165, 663], [1164, 677]],
    [[1156, 628], [1175, 630], [1184, 640], [1179, 658], [1168, 669], [1159, 671]],
    [[1220, 625], [1196, 626]], [[1200, 626], [1203, 655], [1206, 679], [1210, 682], [1233, 672]], [[1196, 650], [1207, 650], [1220, 648]],
    [[1378, 647], [1351, 647], [1339, 654], [1333, 667], [1337, 676], [1351, 674], [1372, 658], [1378, 647]],
    [[1388, 647], [1390, 672], [1396, 697]],
    [[1378, 652], [1391, 645], [1405, 645], [1411, 654], [1405, 669], [1396, 677], [1421, 680], [1430, 684]],
    [[1000, 734], [994, 741], [992, 752], [1000, 766], [1019, 772], [1032, 768], [1042, 756], [1053, 743], [1050, 733], [1030, 726], [1013, 732]],
    [[1073, 728], [1068, 745], [1067, 762], [1078, 767], [1093, 760], [1103, 741]],
    [[1132, 725], [1143, 722], [1172, 721]], [[1144, 723], [1141, 742], [1132, 763]],
    [[1219, 719], [1204, 720], [1183, 735], [1195, 744], [1230, 752], [1255, 754], [1230, 770], [1211, 774], [1199, 774], [1192, 770]],
    [[1289, 713], [1283, 742], [1281, 778]],
    [[1317, 730], [1314, 750], [1308, 771]], [[1310, 728], [1332, 731], [1347, 737], [1345, 745], [1328, 759], [1314, 765]],
    [[1397, 721], [1358, 722]], [[1358, 721], [1355, 742], [1350, 755], [1353, 759], [1368, 757]], [[1348, 744], [1366, 742]],
    [[1430, 722], [1436, 713], [1460, 712], [1472, 722], [1472, 738], [1454, 757], [1438, 765], [1447, 770]],
    [[1433, 792], [1440, 794], [1440, 798], [1435, 798], [1433, 793]]
];
const ink = document.getElementById('ink');
for (const s of strokes) el(ink, 'path', { d: spline(s) });

function drawAll() {
    for (const id in charts) drawChart(id);
}
drawAll();
window.addEventListener('resize', drawAll);
```
